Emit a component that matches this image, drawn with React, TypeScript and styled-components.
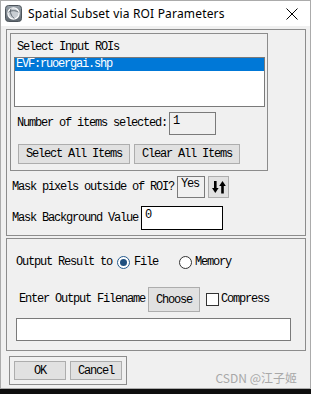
import React from 'react';
import styled, { createGlobalStyle } from 'styled-components';

const GlobalStyle = createGlobalStyle`
  html, body {
    margin: 0;
    padding: 0;
    background: #0e0e0e;
  }
  body {
    width: 311px;
    height: 394px;
    overflow: hidden;
  }
`;

// Window chrome
const Window = styled.div`
  width: 311px;
  height: 389px;
  box-sizing: border-box;
  background: #f0f0f0;
  border: 1px solid #ababab;
  display: flex;
  flex-direction: column;
  font-family: "Liberation Mono", "Courier New", monospace;
  font-size: 12px;
  letter-spacing: -1.2px;
  color: #000;
`;

const TitleBar = styled.div`
  height: 25px;
  flex-shrink: 0;
  background: #fff;
  display: flex;
  align-items: center;
  padding-left: 4px;
`;

const Title = styled.span`
  flex: 1;
  margin-left: 6px;
  font-family: "Noto Sans", sans-serif;
  font-size: 12px;
  letter-spacing: 0.18px;
  color: #000;
`;

const CloseBox = styled.div`
  width: 36px;
  height: 25px;
  display: flex;
  align-items: center;
  justify-content: center;
`;

const Body = styled.div`
  flex: 1;
  display: flex;
  flex-direction: column;
  padding: 3px 4px 4px 5px;
`;

// Frames (widget bases with frame=1)
const Frame = styled.div<{ $h: number; $w?: number }>`
  box-sizing: border-box;
  border: 1px solid #8c8c8c;
  height: ${(p) => p.$h}px;
  width: ${(p) => (p.$w ? `${p.$w}px` : 'auto')};
  display: flex;
  flex-direction: column;
  flex-shrink: 0;
`;

const RoiFrame = styled(Frame)`
  padding: 3px 0 0 3px;
`;

const InnerFrame = styled(Frame)`
  padding: 0 0 0 3px;
`;

const OutputFrame = styled(Frame)`
  margin-top: 2px;
`;

const Label = styled.span<{ $ml?: number }>`
  display: block;
  white-space: pre;
  line-height: 13px;
  margin-left: ${(p) => p.$ml ?? 0}px;
`;

const Row = styled.div<{ $mt: number; $ml?: number; $gap?: number }>`
  display: flex;
  align-items: center;
  margin-top: ${(p) => p.$mt}px;
  margin-left: ${(p) => p.$ml ?? 0}px;
  gap: ${(p) => p.$gap ?? 0}px;
`;

// List box
const ListBox = styled.div`
  margin-top: 3px;
  width: 251px;
  height: 50px;
  box-sizing: border-box;
  background: #fff;
  border: 1px solid #7a7a7a;
`;

const ListItem = styled.div<{ $selected?: boolean }>`
  height: 13px;
  line-height: 13px;
  padding-left: 1px;
  background: ${(p) => (p.$selected ? '#0078d7' : 'transparent')};
  color: ${(p) => (p.$selected ? '#fff' : '#000')};
  white-space: pre;
`;

// Fields
const Field = styled.div<{ $w: number; $h: number; $white?: boolean; $dark?: boolean }>`
  width: ${(p) => p.$w}px;
  height: ${(p) => p.$h}px;
  box-sizing: border-box;
  background: ${(p) => (p.$white ? '#fff' : '#f0f0f0')};
  border: 1px solid ${(p) => (p.$dark ? '#000' : '#7a7a7a')};
  padding: 2px 0 0 3px;
  line-height: 13px;
  flex-shrink: 0;
`;

const Button = styled.div<{ $w: number; $h: number }>`
  width: ${(p) => p.$w}px;
  height: ${(p) => p.$h}px;
  box-sizing: border-box;
  background: #e1e1e1;
  border: 1px solid #adadad;
  display: flex;
  align-items: center;
  justify-content: center;
  flex-shrink: 0;
  white-space: pre;
`;

const Radio = styled.span<{ $checked?: boolean }>`
  width: 13px;
  height: 13px;
  box-sizing: border-box;
  border-radius: 50%;
  border: 1px solid ${(p) => (p.$checked ? '#245a8e' : '#333')};
  background: #fff;
  display: flex;
  align-items: center;
  justify-content: center;
  flex-shrink: 0;
  &::after {
    content: '';
    display: ${(p) => (p.$checked ? 'block' : 'none')};
    width: 7px;
    height: 7px;
    border-radius: 50%;
    background: #1f4f7f;
  }
`;

const CheckBox = styled.span`
  width: 13px;
  height: 13px;
  box-sizing: border-box;
  background: #fff;
  border: 1px solid #333;
  flex-shrink: 0;
`;

const FooterRow = styled.div`
  display: flex;
  align-items: flex-end;
  justify-content: space-between;
  margin-top: 5px;
  padding-left: 3px;
`;

const ButtonFrame = styled(Frame)`
  flex-direction: row;
  padding: 4px 0 0 4px;
  gap: 4px;
`;

const Watermark = styled.span`
  font-family: "Noto Sans CJK SC", "Noto Sans", sans-serif;
  font-size: 12px;
  letter-spacing: 0;
  color: #a8a8a8;
  margin-right: 9px;
  line-height: 14px;
`;

const EnviIcon = () => (
  <svg width="17" height="17" viewBox="0 0 17 17">
    <defs>
      <linearGradient id="ig" x1="0" y1="0" x2="0" y2="1">
        <stop offset="0" stopColor="#9aa3ab" />
        <stop offset="1" stopColor="#5e666e" />
      </linearGradient>
    </defs>
    <rect x="0.5" y="0.5" width="16" height="16" rx="3" fill="url(#ig)" stroke="#4d545b" />
    <circle cx="8.5" cy="8.5" r="5.6" fill="#c9ced3" stroke="#fff" strokeWidth="1.2" />
    <path d="M3.6 7.2 C6 5.2 11 5.2 13.4 7.2" fill="none" stroke="#5e666e" strokeWidth="1" />
    <path d="M6 3.6 C4.6 7 6 11 9.4 13.6" fill="none" stroke="#5e666e" strokeWidth="1" />
  </svg>
);

const CloseIcon = () => (
  <svg width="12" height="12" viewBox="0 0 12 12">
    <path d="M0.5 0.5 L11.5 11.5 M11.5 0.5 L0.5 11.5" stroke="#000" strokeWidth="1" />
  </svg>
);

const ToggleIcon = () => (
  <svg width="14" height="14" viewBox="0 0 14 14">
    <rect x="2" y="1" width="2.6" height="8" fill="#000" />
    <polygon points="0,8 6.6,8 3.3,13" fill="#000" />
    <rect x="9.2" y="5" width="2.6" height="8.5" fill="#000" />
    <polygon points="7.2,6 13.8,6 10.5,1" fill="#000" />
  </svg>
);

export default function App() {
  return (
    <>
      <GlobalStyle />
      <Window>
        <TitleBar>
          <EnviIcon />
          <Title>Spatial Subset via ROI Parameters</Title>
          <CloseBox>
            <CloseIcon />
          </CloseBox>
        </TitleBar>

        <Body>
          <RoiFrame $h={207}>
            <InnerFrame $h={138} $w={258}>
              <Label $ml={3} style={{ marginTop: 7 }}>Select Input ROIs</Label>
              <ListBox>
                <ListItem $selected>EVF:ruoergai.shp</ListItem>
              </ListBox>
              <Row $mt={5} $ml={3} $gap={2}>
                <Label>Number of items selected:</Label>
                <Field $w={47} $h={23}>1</Field>
              </Row>
              <Row $mt={9} $ml={4} $gap={4}>
                <Button $w={112} $h={20}>Select All Items</Button>
                <Button $w={106} $h={20}>Clear All Items</Button>
              </Row>
            </InnerFrame>

            <Row $mt={5} $ml={2} $gap={3}>
              <Label>Mask pixels outside of ROI?</Label>
              <Field $w={28} $h={22} style={{ paddingTop: 1 }}>Yes</Field>
              <Button $w={21} $h={22}>
                <ToggleIcon />
              </Button>
            </Row>
            <Row $mt={8} $ml={2} $gap={3}>
              <Label>Mask Background Value</Label>
              <Field $w={82} $h={24} $white $dark>0</Field>
            </Row>
          </RoiFrame>

          <OutputFrame $h={113}>
            <Row $mt={17} $ml={9}>
              <Label>Output Result to</Label>
              <Radio $checked style={{ marginLeft: 5 }} />
              <Label $ml={4}>File</Label>
              <Radio style={{ marginLeft: 21 }} />
              <Label $ml={3}>Memory</Label>
            </Row>
            <Row $mt={18} $ml={12}>
              <Label>Enter Output Filename</Label>
              <Button $w={52} $h={25} style={{ marginLeft: 3 }}>Choose</Button>
              <CheckBox style={{ marginLeft: 6 }} />
              <Label $ml={2}>Compress</Label>
            </Row>
            <Row $mt={6} $ml={9}>
              <Field $w={275} $h={23} $white />
            </Row>
          </OutputFrame>

          <FooterRow>
            <ButtonFrame $h={29} $w={118}>
              <Button $w={52} $h={19}>OK</Button>
              <Button $w={52} $h={19}>Cancel</Button>
            </ButtonFrame>
            <Watermark>CSDN @江子姬</Watermark>
          </FooterRow>
        </Body>
      </Window>
    </>
  );
}
